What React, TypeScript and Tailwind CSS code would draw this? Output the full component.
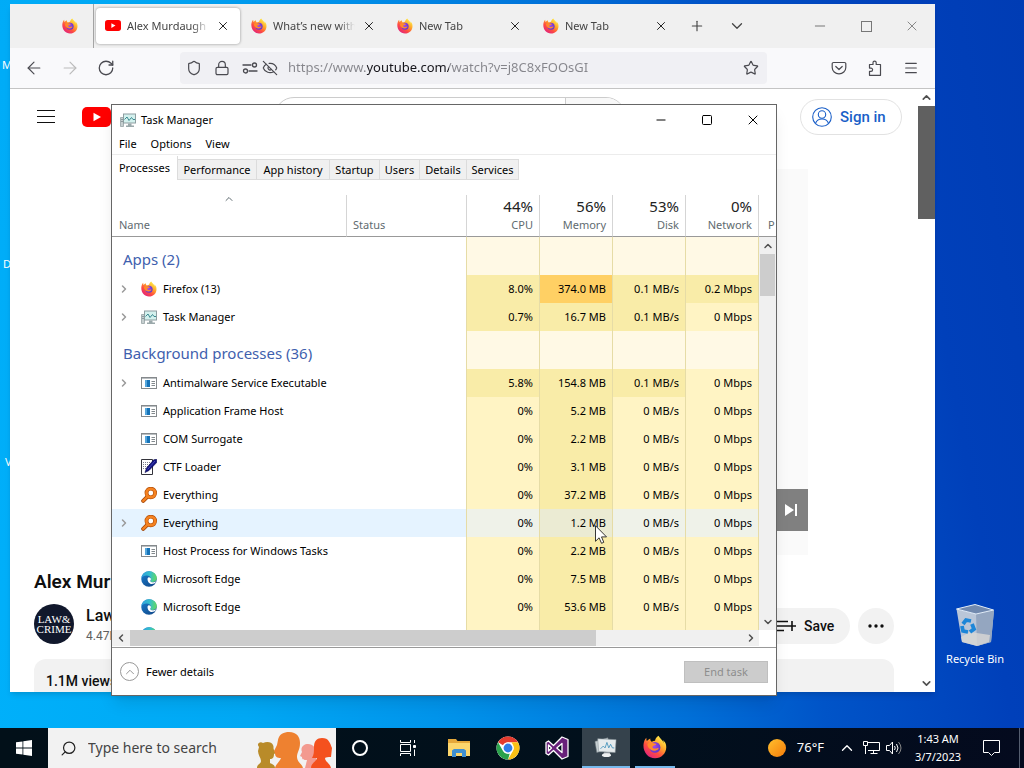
import React, { useState } from 'react';
import {
  ArrowLeft,
  ArrowRight,
  ChevronDown,
  ChevronLeft,
  ChevronRight,
  ChevronUp,
  EyeOff,
  Lock,
  Menu,
  Minus,
  Plus,
  RotateCw,
  Search,
  Settings2,
  Shield,
  Square,
  Star,
  X,
} from 'lucide-react';

interface IconProps {
  className?: string;
}

const FirefoxIcon = ({ className }: IconProps) => (
  <svg viewBox="0 0 32 32" className={className} aria-hidden="true">
    <defs>
      <linearGradient id="fx-body" x1="0.85" y1="0.1" x2="0.2" y2="0.95">
        <stop offset="0" stopColor="#fff04d" />
        <stop offset="0.35" stopColor="#ffa52a" />
        <stop offset="0.65" stopColor="#ff4d40" />
        <stop offset="1" stopColor="#e0227e" />
      </linearGradient>
      <radialGradient id="fx-globe" cx="0.4" cy="0.4" r="0.7">
        <stop offset="0" stopColor="#a44bf0" />
        <stop offset="1" stopColor="#5a34c4" />
      </radialGradient>
    </defs>
    <path
      fill="url(#fx-body)"
      d="M30 11c-.8-1.700-2.200-3.500-3.500-4.100.8 1.500 1.300 3 1.500 4.200C26 6.500 22.500 4.600 20.600 1c-3.200 1.800-4.300 5-4.500 6.600-1.500.1-3 .6-4.300 1.300-1.600-.8-2.300-2.700-2.100-4.400-2 .9-3.500 2.300-4.500 3.400-.8-.9-.7-3.800-.7-4.400C2.400 5.100.8 9.400.6 13.500.3 23.200 7.200 31 16 31c8.500 0 15-6.500 15-14.700 0-2-.3-3.800-1-5.300z"
    />
    <circle cx="16" cy="16.500" r="7.200" fill="url(#fx-globe)" />
    <path
      fill="#ff8a2b"
      d="M6 12c2-2.500 5-2.600 7-1.500l4 1c1 .4.500 1.500-.4 1.800l-3.100 1.200c-1.200.6-1 2.200.2 3 1.900 1.200 4 .2 6-.3 1.500-.3 1.300 1 .4 1.800-2.500 2.200-6.300 2.600-9 1C7.500 18 5.500 15 6 12z"
    />
  </svg>
);

const EdgeIcon = ({ className }: IconProps) => (
  <svg viewBox="0 0 32 32" className={className} aria-hidden="true">
    <defs>
      <linearGradient id="edge-top" x1="0" y1="0.4" x2="1" y2="0.5">
        <stop offset="0" stopColor="#2f9fe0" />
        <stop offset="0.55" stopColor="#35c1c9" />
        <stop offset="1" stopColor="#62d962" />
      </linearGradient>
      <linearGradient id="edge-low" x1="0" y1="0" x2="0.8" y2="1">
        <stop offset="0" stopColor="#1b7fd0" />
        <stop offset="1" stopColor="#114a8b" />
      </linearGradient>
    </defs>
    <circle cx="16" cy="16" r="15.500" fill="url(#edge-low)" />
    <path
      fill="url(#edge-top)"
      d="M.8 14C2 6 8.300.5 16 .5c8.500 0 15.500 6 15.500 13.500 0 5-4 8-8 8-3 0-5-1-5-2.200 0-1 1.500-1.300 1.500-4C20 12.500 16.500 9 11.500 9 6.500 9 2.500 11 .8 14z"
    />
    <path fill="#fff" d="M13 16c0-1.800 1-3.200 2.600-3.600 2.600.1 4.300 1.900 4.300 3.800 0 2.300-1.400 2.500-1.400 3.700 0 1.600 2.700 2.500 5.300 2.500 2.300 0 4.300-.8 5.200-1.400.7-.4 1.200.3.800 1C28.500 24.500 25 26 21.500 26 16.500 26 13 21 13 16z" />
  </svg>
);

const ChromeIcon = ({ className }: IconProps) => (
  <svg viewBox="0 0 48 48" className={className} aria-hidden="true">
    <circle cx="24" cy="24" r="23" fill="#fff" />
    <path fill="#e33b2e" d="M24 1a23 23 0 0 1 19.900 11.500H24a11.500 11.500 0 0 0-10 5.800L4.100 12.500A23 23 0 0 1 24 1z" />
    <path fill="#fbc116" d="M43.900 12.500A23 23 0 0 1 24 47l10-17.300a11.500 11.500 0 0 0 0-11.500l-3-5.700z" />
    <path fill="#2ba24c" d="M4.100 12.500 14 29.800a11.500 11.500 0 0 0 13.500 5.200L24 47A23 23 0 0 1 4.100 12.500z" />
    <circle cx="24" cy="24" r="11" fill="#fff" />
    <circle cx="24" cy="24" r="8.800" fill="#2f7de9" />
  </svg>
);

const TaskManagerIcon = ({ className }: IconProps) => (
  <svg viewBox="0 0 16 16" className={className} aria-hidden="true">
    <path fill="#c6cfd0" stroke="#97a3a4" strokeWidth="0.800" d="M.5 5.500h3v9h-3z" />
    <path stroke="#7d8d8f" strokeWidth="0.800" d="M1 7.500h2M1 9.500h2" />
    <rect x="3.500" y="2" width="12" height="9" fill="#d3f1ee" stroke="#8d9ea1" />
    <path fill="none" stroke="#3a8a90" d="M4.500 7.500 7 5l2 3.500 2.500-3 1.500 2h2" />
    <path fill="#9aa8aa" d="M8 11.500h3.500v2H14V15H6v-1.500h2z" />
  </svg>
);

const TaskManagerLargeIcon = ({ className }: IconProps) => (
  <svg viewBox="0 0 26 24" className={className} aria-hidden="true">
    <path fill="#c7d0d3" stroke="#7a858a" strokeWidth="0.600" d="m1 6 14-4 2 12L3 18z" />
    <path fill="#e5ebed" stroke="#89949a" strokeWidth="0.600" d="m4 3 20 1-1 14-18-1z" />
    <path fill="none" stroke="#3e8fb8" strokeWidth="0.900" d="m7 14 3-3 2 2 2-6 2 6 2-4 2 4h2" />
    <path fill="#c9ced1" d="M11 18h6l1 3c-1 2-7 2-9 0z" />
    <ellipse cx="13.500" cy="21" rx="5" ry="2" fill="#eef1f2" />
  </svg>
);

const ProcessIcon = ({ className }: IconProps) => (
  <svg viewBox="0 0 16 16" className={className} aria-hidden="true">
    <rect x="0.500" y="2.500" width="15" height="11" fill="#fff" stroke="#85898c" />
    <path stroke="#b9bec1" d="M1 3.500h14" />
    <rect x="4" y="5" width="5" height="7" fill="#1673b8" />
    <rect x="4" y="5" width="2" height="7" fill="#55a6dc" />
    <path stroke="#82898d" d="M10.500 6.500H14M10.500 8.500H14M10.500 10.500H14" />
  </svg>
);

const CtfIcon = ({ className }: IconProps) => (
  <svg viewBox="0 0 16 16" className={className} aria-hidden="true">
    <path fill="#fff" stroke="#33333b" d="M.5.500h11v15H.5z" />
    <path stroke="#777a88" strokeDasharray="1 1" d="M2 3.500h8M2 5.500h7M2 7.500h5M2 9.500h4" />
    <path fill="#111184" stroke="#07074a" strokeWidth="0.600" d="m15.700.3-3 .5L5.500 9 4 13.500l4-2L15.700 3.500z" />
    <path stroke="#5a62c8" strokeWidth="0.700" d="M14 2 6.500 10.500" />
  </svg>
);

const EverythingIcon = ({ className }: IconProps) => (
  <svg viewBox="0 0 16 16" className={className} aria-hidden="true">
    <path stroke="#a24508" strokeWidth="4" strokeLinecap="round" d="m2.200 13.800 4-4" />
    <circle cx="9.800" cy="6" r="4.300" fill="#fff" stroke="#b4500a" strokeWidth="3.800" />
    <path stroke="#f58220" strokeWidth="2.400" strokeLinecap="round" d="m2.200 13.800 4-4" />
    <circle cx="9.800" cy="6" r="4.300" fill="none" stroke="#f58220" strokeWidth="2.600" />
  </svg>
);

const YouTubeIcon = ({ className }: IconProps) => (
  <svg viewBox="0 0 29 20" className={className} aria-hidden="true">
    <rect width="29" height="20" rx="5" fill="#f00" />
    <path fill="#fff" d="m11.500 5.700 7.500 4.300-7.500 4.300z" />
  </svg>
);

const PocketIcon = ({ className }: IconProps) => (
  <svg viewBox="0 0 16 16" className={className} fill="none" stroke="currentColor" strokeWidth="1.200" aria-hidden="true">
    <path d="M2.500 2.500h11a1.300 1.300 0 0 1 1.300 1.300V7.500a6.800 6.300 0 0 1-13.600 0V3.800a1.300 1.300 0 0 1 1.300-1.300z" />
    <path strokeLinecap="round" strokeLinejoin="round" d="m4.800 6.500 3.200 3 3.200-3" />
  </svg>
);

const PuzzleIcon = ({ className }: IconProps) => (
  <svg viewBox="0 0 16 16" className={className} fill="none" stroke="currentColor" strokeWidth="1.200" aria-hidden="true">
    <path d="M2.500 4.500H6V2.800a1.600 1.600 0 0 1 3.200 0v1.700h4.300v10.800H2.500v-4H4a1.600 1.600 0 0 0 0-3.200H2.500z" strokeLinejoin="round" />
  </svg>
);

const PermissionsIcon = ({ className }: IconProps) => (
  <svg viewBox="0 0 16 16" className={className} fill="none" stroke="currentColor" strokeWidth="1.300" strokeLinecap="round" aria-hidden="true">
    <path d="M1 5h8M7 11h8" />
    <circle cx="12.500" cy="5" r="2" />
    <circle cx="3.500" cy="11" r="2" />
  </svg>
);

const RecycleBinIcon = ({ className }: IconProps) => (
  <svg viewBox="0 0 40 44" className={className} aria-hidden="true">
    <path fill="#b9c6d8" d="M1.500 6 21 11l18-4-3 32-14 4-15-4z" />
    <path fill="#94a6c0" d="m21 11 18-4-3 32-14 4z" />
    <path fill="#7189ae" stroke="#e3edf7" d="M1.500 6 20 1.500 38.500 7 21 11z" />
    <path fill="#d9d8d4" opacity="0.800" d="m6 34 9-5 20 3-1 7-12 4-15-4z" />
    <g fill="none" stroke="#1c86d8" strokeWidth="3.800">
      <path d="m8 21 3-4 5 1" />
      <path d="m17 21 2 5-4 3" />
      <path d="m13 29-5-1-1-5" />
    </g>
  </svg>
);

const PeopleArt = ({ className }: IconProps) => (
  <svg viewBox="0 0 80 38" className={className} aria-hidden="true">
    <path fill="#b98b29" d="M3 17c-3-3 1-6 4-4 4-2 9-1 10 2 1 2 0 3 1 5l2 3-2 1c0 3-1 5-4 5v4c2 1 5 2 5 5H1c0-4 4-4 4-7 0-3-3-6-3-10z" />
    <path fill="#f39a8f" d="M46 22c-2-5 2-8 6-8 5 0 8 4 8 8v16H49l2-8c-3 0-5 0-5-3l-2-1z" />
    <path fill="#ee8130" d="M22 10c1-6 6-8 11-8 8 0 11 5 11 11 0 7-3 9-3 14 0 5 5 7 6 11H19c1-4 5-7 6-10-4 0-6-1-6-5l-1-2 3-6z" />
    <path fill="#f4511e" d="M58 17c0-6 3-9 8-9 7 0 8 5 10 10l-1 9c-3 0-5 0-6 1 0 4 5 5 6 10H55c0-5 5-6 6-10h-5c2-3 2-7 2-11z" />
  </svg>
);

const VisualStudioIcon = ({ className }: IconProps) => (
  <svg viewBox="0 0 24 24" className={className} aria-hidden="true">
    <path
      fill="#68217a"
      stroke="#fff"
      strokeWidth="1.300"
      strokeLinejoin="round"
      fillRule="evenodd"
      d="m17 1 6 2.500v17L17 23l-8.500-8.500L3.500 19 1 17.500v-11L3.500 5l5 4.500zM17 7.500 11.800 12l5.200 4.500zM3.500 9v6l3-3z"
    />
  </svg>
);

const icons = {
  firefox: FirefoxIcon,
  taskmgr: TaskManagerIcon,
  process: ProcessIcon,
  ctf: CtfIcon,
  everything: EverythingIcon,
  edge: EdgeIcon,
};

interface Process {
  name: string;
  icon: keyof typeof icons;
  expandable?: boolean;
  hovered?: boolean;
  usage: [string, string, string, string];
}

const groups: { title: string; processes: Process[] }[] = [
  {
    title: 'Apps (2)',
    processes: [
      { name: 'Firefox (13)', icon: 'firefox', expandable: true, usage: ['8.0%', '374.0 MB', '0.1 MB/s', '0.2 Mbps'] },
      { name: 'Task Manager', icon: 'taskmgr', expandable: true, usage: ['0.7%', '16.7 MB', '0.1 MB/s', '0 Mbps'] },
    ],
  },
  {
    title: 'Background processes (36)',
    processes: [
      { name: 'Antimalware Service Executable', icon: 'process', expandable: true, usage: ['5.8%', '154.8 MB', '0.1 MB/s', '0 Mbps'] },
      { name: 'Application Frame Host', icon: 'process', usage: ['0%', '5.2 MB', '0 MB/s', '0 Mbps'] },
      { name: 'COM Surrogate', icon: 'process', usage: ['0%', '2.2 MB', '0 MB/s', '0 Mbps'] },
      { name: 'CTF Loader', icon: 'ctf', usage: ['0%', '3.1 MB', '0 MB/s', '0 Mbps'] },
      { name: 'Everything', icon: 'everything', usage: ['0%', '37.2 MB', '0 MB/s', '0 Mbps'] },
      { name: 'Everything', icon: 'everything', expandable: true, hovered: true, usage: ['0%', '1.2 MB', '0 MB/s', '0 Mbps'] },
      { name: 'Host Process for Windows Tasks', icon: 'process', usage: ['0%', '2.2 MB', '0 MB/s', '0 Mbps'] },
      { name: 'Microsoft Edge', icon: 'edge', usage: ['0%', '7.5 MB', '0 MB/s', '0 Mbps'] },
      { name: 'Microsoft Edge', icon: 'edge', usage: ['0%', '53.6 MB', '0 MB/s', '0 Mbps'] },
      { name: '', icon: 'edge', usage: ['', '', '', ''] },
    ],
  },
];

const totals = [
  { label: 'CPU', value: '44%' },
  { label: 'Memory', value: '56%' },
  { label: 'Disk', value: '53%' },
  { label: 'Network', value: '0%' },
];

function heatClass(value: string, column: number, hovered?: boolean): string {
  if (hovered) return column === 1 ? 'bg-[#ebebd3]' : 'bg-[#eff2e9]';
  if (value === '374.0 MB') return 'bg-[#ffd064]';
  if (column === 1) return 'bg-[#f9eca8]';
  return value === '' || value.startsWith('0 ') || value === '0%' ? 'bg-[#fff4c4]' : 'bg-[#f9eca8]';
}

const managerTabs = [
  { label: 'Performance', width: 'w-[79px]' },
  { label: 'App history', width: 'w-[73px]' },
  { label: 'Startup', width: 'w-[50px]' },
  { label: 'Users', width: 'w-[40px]' },
  { label: 'Details', width: 'w-[47px]' },
  { label: 'Services', width: 'w-[52px]' },
];

const ProcessTable = () => (
  <table className="w-full table-fixed border-separate border-spacing-0">
    <colgroup>
      <col />
      <col className="w-[120px]" />
      <col className="w-[73px]" />
      <col className="w-[73px]" />
      <col className="w-[73px]" />
      <col className="w-[73px]" />
      <col className="w-[17px]" />
    </colgroup>
    <thead>
      <tr className="h-[42px] text-[#5f6b70]">
        <th className="relative border-r border-b border-r-[#d5d5d5] border-b-[#999] pb-[3px] pl-[7px] text-left align-bottom font-normal">
          <ChevronUp className="absolute -top-0.5 left-1/2 h-3 w-3 -translate-x-1/2" strokeWidth={2} />
          Name
        </th>
        <th className="border-r border-b border-r-[#d5d5d5] border-b-[#999] pb-[3px] pl-1.5 text-left align-bottom font-normal">
          Status
        </th>
        {totals.map((total) => (
          <th
            key={total.label}
            className="border-r border-b border-r-[#d5d5d5] border-b-[#999] p-0 pr-1.5 pb-[3px] text-right align-bottom font-normal"
          >
            <span className="block text-[15px] leading-[22px] text-[#222]">{total.value}</span>
            <span className="block leading-4">{total.label}</span>
          </th>
        ))}
        <th className="overflow-hidden border-b border-[#999] pb-[3px] pl-[9px] text-left align-bottom font-normal">P</th>
      </tr>
    </thead>
    <tbody>
      {groups.map((group) => (
        <React.Fragment key={group.title}>
          <tr className="h-[38px]">
            <th colSpan={2} scope="rowgroup" className="border-r border-[#e6dca6] pt-1.5 pl-[11px] text-left text-[15px] leading-5 font-normal text-[#3f5fae]">
              {group.title}
            </th>
            {totals.map((total) => (
              <td key={total.label} className="border-r border-[#e6dca6] bg-[#fff9e5]" />
            ))}
            <td />
          </tr>
          {group.processes.map((process, index) => {
            const Icon = icons[process.icon];
            return (
              <tr key={index} className={process.hovered ? 'h-7 bg-[#e5f3ff]' : 'h-7'}>
                <td colSpan={2} className="border-r border-[#e6dca6] p-0">
                  <div className="flex items-center pl-1.5">
                    <span className="w-[23px]">
                      {process.expandable && <ChevronRight className="h-3 w-3 text-[#9a9a9a]" strokeWidth={3} />}
                    </span>
                    <Icon className="h-4 w-4 shrink-0" />
                    <span className="pl-1.5 whitespace-nowrap">{process.name}</span>
                  </div>
                </td>
                {process.usage.map((value, column) => (
                  <td
                    key={column}
                    className={`border-r border-[#e6dca6] p-0 pr-1.5 text-right whitespace-nowrap ${heatClass(value, column, process.hovered)}`}
                  >
                    {value}
                  </td>
                ))}
                <td />
              </tr>
            );
          })}
        </React.Fragment>
      ))}
    </tbody>
  </table>
);

const TaskManagerWindow = () => (
  <section
    aria-label="Task Manager"
    className="absolute top-[104px] right-[247px] bottom-8 left-[111px] flex flex-col border border-[#666] bg-white text-[11px] leading-4 text-black shadow-lg"
  >
    <header className="flex h-[29px] shrink-0 items-center pl-2">
      <TaskManagerIcon className="h-4 w-4" />
      <h1 className="flex-1 pl-[5px]">Task Manager</h1>
      <button aria-label="Minimize" className="flex w-[46px] justify-center">
        <Minus className="h-[14px] w-[14px]" strokeWidth={1.7} />
      </button>
      <button aria-label="Maximize" className="flex w-[46px] justify-center">
        <Square className="h-3 w-3" strokeWidth={2} strokeLinejoin="miter" />
      </button>
      <button aria-label="Close" className="flex w-[46px] justify-center">
        <X className="h-4 w-4" strokeWidth={1.5} />
      </button>
    </header>
    <nav className="flex h-[21px] shrink-0 items-center gap-[14px] border-b border-[#ececec] pl-[7px]">
      <button>File</button>
      <button>Options</button>
      <button>View</button>
    </nav>
    <div role="tablist" className="flex h-[25px] shrink-0 items-end">
      <button role="tab" aria-selected="true" className="h-6 w-[66px] border-r border-[#dcdcdc]">
        Processes
      </button>
      {managerTabs.map((tab) => (
        <button
          key={tab.label}
          role="tab"
          aria-selected="false"
          className={`h-[21px] border-t border-r border-b border-[#dcdcdc] bg-[#f0f0f0] ${tab.width}`}
        >
          {tab.label}
        </button>
      ))}
    </div>
    <div className="relative mt-[15px] min-h-0 flex-1 overflow-hidden">
      <ProcessTable />
      <div className="absolute top-[42px] right-0 bottom-0 flex w-[17px] flex-col items-center bg-[#f0f0f0] text-[#505050]">
        <ChevronUp className="mt-[3px] mb-0.5 h-3 w-3 shrink-0" strokeWidth={3} />
        <div className="h-[42px] w-[15px] bg-[#cdcdcd]" />
        <ChevronDown className="mt-auto mb-0.5 h-3 w-3 shrink-0" strokeWidth={3} />
      </div>
    </div>
    <div className="mr-[17px] flex h-4 shrink-0 items-center bg-[#f0f0f0] text-[#505050]">
      <ChevronLeft className="mx-[3px] h-3 w-3 shrink-0" strokeWidth={3} />
      <div className="h-full w-[72%] bg-[#cdcdcd]" />
      <ChevronRight className="mr-0.5 ml-auto h-3 w-3 shrink-0" strokeWidth={3} />
    </div>
    <footer className="mt-px flex h-12 shrink-0 items-center justify-between border-t border-[#999] pr-2 pl-2">
      <button className="flex items-center gap-[7px]">
        <span className="flex h-[19px] w-[19px] items-center justify-center rounded-full border border-[#999] text-[#888]">
          <ChevronUp className="h-[14px] w-[14px]" strokeWidth={1.5} />
        </span>
        Fewer details
      </button>
      <button disabled className="h-[22px] w-[84px] border border-[#bfbfbf] bg-[#cccccc] text-[#8d8d8d]">
        End task
      </button>
    </footer>
  </section>
);

const browserTabs = [
  { title: 'Alex Murdaugh', icon: YouTubeIcon, active: true },
  { title: 'What’s new with', icon: FirefoxIcon, active: false },
  { title: 'New Tab', icon: FirefoxIcon, active: false },
  { title: 'New Tab', icon: FirefoxIcon, active: false },
];

const BrowserChrome = () => {
  const [url, setUrl] = useState('https://www.youtube.com/watch?v=j8C8xFOOsGI');

  return (
    <>
      <div className="flex h-11 shrink-0 items-center bg-[#f0f0f0] text-[#444]">
        <button aria-label="Firefox View" className="flex h-full w-[84px] items-center justify-end border-r border-[#a5a5a5] pr-[15px]">
          <FirefoxIcon className="h-4 w-4" />
        </button>
        <div className="ml-px flex">
          {browserTabs.map((tab, index) => {
            const Icon = tab.icon;
            return (
              <div
                key={index}
                className={
                  tab.active
                    ? 'mx-px flex h-9 w-36 items-center gap-1.5 rounded bg-white px-[9px] shadow-[0_0_3px_rgba(0,0,0,0.4)]'
                    : 'mx-px flex h-9 w-36 items-center gap-1.5 px-[9px]'
                }
              >
                <Icon className="w-4 shrink-0" />
                <span className="min-w-0 flex-1 [mask-image:linear-gradient(to_right,black_80%,transparent)] text-[11px] whitespace-nowrap">
                  {tab.title}
                </span>
                <button aria-label="Close tab" className="flex w-4 shrink-0 justify-center text-[#222]">
                  <X className="h-[14px] w-[14px]" strokeWidth={1.7} />
                </button>
              </div>
            );
          })}
        </div>
        <button aria-label="Open a new tab" className="flex w-9 justify-center">
          <Plus className="h-4 w-4" strokeWidth={1.7} />
        </button>
        <button aria-label="List all tabs" className="ml-1 flex w-9 justify-center">
          <ChevronDown className="h-[18px] w-[18px]" strokeWidth={1.7} />
        </button>
        <div className="ml-auto flex text-[#777]">
          <button aria-label="Minimize" className="flex w-[46px] justify-center">
            <Minus className="h-4 w-4" strokeWidth={1.5} />
          </button>
          <button aria-label="Maximize" className="flex w-[46px] items-center justify-center">
            <span className="h-[11px] w-[11px] border border-[#777]" />
          </button>
          <button aria-label="Close" className="flex w-[46px] justify-center">
            <X className="h-4 w-4" strokeWidth={1.3} />
          </button>
        </div>
      </div>
      <div className="flex h-[41px] shrink-0 items-center border-b border-[#c4c4c4] bg-[#f9f9fb] px-1.5 text-[#4a4a50]">
        <button aria-label="Back" className="flex w-9 justify-center">
          <ArrowLeft className="h-5 w-5" strokeWidth={1.4} />
        </button>
        <button aria-label="Forward" className="flex w-9 justify-center text-[#bbb]">
          <ArrowRight className="h-5 w-5" strokeWidth={1.4} />
        </button>
        <button aria-label="Reload" className="flex w-9 justify-center">
          <RotateCw className="h-[18px] w-[18px]" strokeWidth={1.7} />
        </button>
        <div className="mr-[54px] ml-14 flex h-8 flex-1 items-center rounded bg-[#f0f0f4] px-1.5">
          <Shield className="h-4 w-4 shrink-0" strokeWidth={1.8} />
          <Lock className="ml-3 h-4 w-4 shrink-0" strokeWidth={1.8} />
          <PermissionsIcon className="ml-3 h-4 w-4 shrink-0" />
          <EyeOff className="ml-1 h-4 w-4 shrink-0" strokeWidth={1.8} />
          <input
            aria-label="Address"
            value={url}
            onChange={(event) => setUrl(event.target.value)}
            className="ml-2.5 min-w-0 flex-1 bg-[linear-gradient(to_right,#85858b_79px,#15141a_79px,#15141a_161px,#85858b_161px)] bg-clip-text text-[13px] text-transparent outline-none"
          />
          <button aria-label="Bookmark this page">
            <Star className="mr-0.5 h-4 w-4" strokeWidth={1.8} />
          </button>
        </div>
        <button aria-label="Save to Pocket" className="flex w-9 justify-center">
          <PocketIcon className="h-4 w-4" />
        </button>
        <button aria-label="Extensions" className="flex w-9 justify-center">
          <PuzzleIcon className="h-4 w-4" />
        </button>
        <button aria-label="Application menu" className="flex w-9 justify-center">
          <Menu className="h-4 w-4" strokeWidth={1.7} />
        </button>
      </div>
    </>
  );
};

const VideoPage = () => (
  <main className="min-w-0 flex-1 overflow-hidden font-['Roboto',sans-serif] text-[#0f0f0f]">
    <div className="flex h-14 items-center px-4">
      <button aria-label="Guide" className="flex w-10 justify-center">
        <svg viewBox="0 0 18 14" className="h-[14px] w-[18px]" stroke="currentColor" strokeWidth="1">
          <path d="M0 .5h18M0 6.500h18M0 12.500h18" />
        </svg>
      </button>
      <a href="#home" aria-label="Home" className="ml-4">
        <YouTubeIcon className="h-5 w-[29px]" />
      </a>
      <div className="mr-3 flex flex-1 justify-center">
        <div className="flex h-10 w-[352px] overflow-hidden rounded-full border border-[#ccc]">
          <input aria-label="Search videos" className="min-w-0 flex-1 px-4 outline-none" />
          <button aria-label="Search" className="flex w-[60px] items-center justify-center border-l border-[#ccc] bg-[#f8f8f8]">
            <Search className="h-5 w-5" strokeWidth={1.5} />
          </button>
        </div>
      </div>
      <a href="#signin" className="flex h-9 w-[102px] items-center gap-2 rounded-full border border-[#e2e2e2] pl-[11px] text-[15px] font-medium text-[#1a5fc8]">
        <svg viewBox="0 0 20 20" className="h-5 w-5" fill="none" stroke="currentColor" strokeWidth="1.100" aria-hidden="true">
          <circle cx="10" cy="10" r="9.300" />
          <circle cx="10" cy="7.500" r="3.700" />
          <path d="M3.500 16.500c1-3.300 3.500-4.500 6.500-4.500s5.500 1.200 6.500 4.500" />
        </svg>
        Sign in
      </a>
    </div>
    <div className="mx-[110px] mt-6 flex h-[386px] flex-col justify-end bg-[#fafafa] pb-6">
      <div className="flex h-[42px] items-center justify-end bg-[#808080] pr-2.5">
        <button aria-label="Next">
          <svg viewBox="0 0 14 14" className="h-[14px] w-[14px]" fill="#fff">
            <path d="M1 1v12l9-6zM11 1h2v12h-2z" />
          </svg>
        </button>
      </div>
    </div>
    <div className="mr-6 ml-6">
      <h2 className="mt-[13px] text-[19px] leading-7 font-semibold">Alex Mur</h2>
      <div className="mt-2 flex h-10 items-end">
        <div className="flex h-10 w-10 shrink-0 flex-col items-center justify-center rounded-full bg-[#11182c] font-['Liberation_Serif',serif] text-[11px] leading-[10px] text-white">
          <span>LAW&amp;</span>
          <span>CRIME</span>
        </div>
        <div className="ml-3 h-[38px] flex-1">
          <p className="text-base leading-5 font-medium">Law</p>
          <p className="text-xs leading-5 text-[#606060]">4.47M</p>
        </div>
        <button className="flex h-9 w-[90px] items-center gap-2 rounded-full bg-[#f2f2f2] pl-4 text-sm font-medium">
          <svg viewBox="0 0 20 14" className="h-[14px] w-5" stroke="currentColor" strokeWidth="1.600">
            <path d="M0 2.500h12M0 7h12M0 11.500h8M16 2v10M11 7h9" />
          </svg>
          Save
        </button>
        <button aria-label="More actions" className="ml-2 flex h-9 w-9 items-center justify-center rounded-full bg-[#f2f2f2]">
          <svg viewBox="0 0 16 4" className="h-1 w-4" fill="currentColor">
            <circle cx="2" cy="2" r="1.700" />
            <circle cx="8" cy="2" r="1.700" />
            <circle cx="14" cy="2" r="1.700" />
          </svg>
        </button>
      </div>
      <div className="mt-[15px] h-28 rounded-xl bg-[#f2f2f2] p-3 text-sm font-medium">1.1M views</div>
    </div>
  </main>
);

const BrowserWindow = () => (
  <section aria-label="Firefox" className="absolute top-1 right-[89px] bottom-9 left-2.5 flex flex-col bg-white shadow-md">
    <BrowserChrome />
    <div className="flex min-h-0 flex-1">
      <VideoPage />
      <div className="flex w-[17px] shrink-0 flex-col items-center bg-white text-[#505050]">
        <ChevronUp className="my-0.5 h-[13px] w-[13px] shrink-0" strokeWidth={3} />
        <div className="h-[113px] w-full bg-[#606060]" />
        <ChevronDown className="mt-auto mb-0.5 h-[13px] w-[13px] shrink-0" strokeWidth={3} />
      </div>
    </div>
  </section>
);

const Taskbar = () => (
  <footer className="flex h-10 shrink-0 bg-[linear-gradient(to_right,#021019,#01101c_60%,#040a1e)] text-white">
    <button aria-label="Start" className="flex w-12 items-center justify-center">
      <svg viewBox="0 0 16 16" className="h-4 w-4" fill="#fff">
        <path d="m0 2.300 6.500-.9v6.200H0zM7.300 1.300 16 0v7.600H7.300zM0 8.400h6.500v6.200L0 13.700zM7.300 8.400H16V16l-8.700-1.200z" />
      </svg>
    </button>
    <label className="relative flex w-72 items-center bg-[#f2f2f2] text-[#222]">
      <Search className="ml-3 h-[17px] w-[17px] -scale-x-100" strokeWidth={1.7} />
      <input
        aria-label="Type here to search"
        placeholder="Type here to search"
        className="ml-[11px] w-40 text-sm outline-none placeholder:text-[#444]"
      />
      <PeopleArt className="absolute right-0 bottom-0 h-[38px] w-20" />
    </label>
    <button aria-label="Cortana" className="flex w-12 items-center justify-center">
      <span className="h-4 w-4 rounded-full border-2 border-white" />
    </button>
    <button aria-label="Task View" className="flex w-12 items-center justify-center">
      <svg viewBox="0 0 16 16" className="h-4 w-4" fill="none" stroke="#fff">
        <path d="M.5 0v2.500h10V0M.5 16v-2.500h10V16M.5 4.500h10v7H.5zM14.500 0v3M14.500 9.500V16" />
        <path fill="#fff" d="M13.500 5.500h2v2h-2z" />
      </svg>
    </button>
    <div className="ml-[3px] flex gap-px">
      <button aria-label="File Explorer" className="flex w-12 items-center justify-center">
        <svg viewBox="0 0 22 18" className="h-[18px] w-[22px]">
          <path fill="#e5a83a" d="M0 0h8l1.500 2H22v15H0z" />
          <path fill="#fcd66c" d="M0 4h22v13H0z" />
          <path fill="#3f8fd0" d="M4 18v-6.500L6 10h10l2 1.500V18h-4v-4H8v4z" />
        </svg>
      </button>
      <button aria-label="Chrome" className="flex w-12 items-center justify-center">
        <ChromeIcon className="h-6 w-6" />
      </button>
      <button aria-label="Visual Studio" className="flex w-12 items-center justify-center">
        <VisualStudioIcon className="h-6 w-6" />
      </button>
      <button aria-label="Task Manager" className="flex w-12 items-center justify-center border-b-2 border-[#76b9ed] bg-[#35424c]">
        <TaskManagerLargeIcon className="h-[22px] w-6" />
      </button>
      <button aria-label="Firefox" className="flex w-12 justify-center">
        <span className="flex h-full w-10 items-center justify-center border-b-2 border-[#76b9ed]">
          <FirefoxIcon className="h-6 w-6" />
        </span>
      </button>
    </div>
    <div className="ml-auto flex items-center">
      <button className="flex items-center gap-[11px] text-[13px]">
        <span className="h-[18px] w-[18px] rounded-full bg-[linear-gradient(135deg,#ffc02e,#f57c0a)]" />
        76°F
      </button>
      <button aria-label="Show hidden icons" className="ml-[15px] flex w-4 justify-center">
        <ChevronUp className="h-[18px] w-[18px] shrink-0" strokeWidth={1.8} />
      </button>
      <svg viewBox="0 0 17 14" className="ml-2 h-[14px] w-[17px]" fill="none" stroke="#fff">
        <path d="M5 1.500h11.500v8H5M.5.500h4v4h-4zM2.500 5v8M7.500 12.500h7M10.500 10v2" />
      </svg>
      <svg viewBox="0 0 17 14" className="ml-1.5 h-[14px] w-[17px]" fill="none" stroke="#fff">
        <path d="M.5 4.500h3l3-3.500v12l-3-3.500h-3zM8.500 5q1.500 2 0 4M10.500 3q3 4 0 8" />
        <path stroke="#888" d="M12.500 1q5 6 0 12" />
      </svg>
      <time className="ml-2.5 w-[50px] text-center text-[11px] leading-[18px] whitespace-nowrap">
        1:43 AM
        <br />
        3/7/2023
      </time>
      <button aria-label="Notifications" className="ml-5 flex w-4 justify-center">
        <svg viewBox="0 0 17 16" className="h-4 w-[17px] shrink-0" fill="none" stroke="#fff">
          <path d="M.5.500h16v12h-5l-3 3-3-3h-5z" />
        </svg>
      </button>
      <button aria-label="Show desktop" className="ml-5 h-10 w-[5px] border-l border-[#555e70]" />
    </div>
  </footer>
);

export default function App() {
  return (
    <div className="flex h-screen flex-col overflow-hidden bg-[linear-gradient(80deg,#00b0fa_0%,#00a8f4_22%,#0092ea_40%,#0070d8_60%,#0054c8_72%,#0040ba_88%,#003cb4_100%)] font-['Noto_Sans',sans-serif]">
      <div className="relative min-h-0 flex-1 overflow-hidden">
        <span className="absolute top-[57px] left-[2px] text-[11px] leading-4 text-white">M</span>
        <span className="absolute top-[256px] left-[3px] text-[11px] leading-4 text-white">D</span>
        <span className="absolute top-[454px] left-[5px] text-[11px] leading-4 text-white">V</span>
        <div className="absolute top-[603px] right-3 flex w-[74px] flex-col items-center text-white">
          <RecycleBinIcon className="h-11 w-10" />
          <span className="mt-1 text-[11px] leading-4 whitespace-nowrap">Recycle Bin</span>
        </div>
        <BrowserWindow />
        <TaskManagerWindow />
        <svg viewBox="0 0 12 19" className="absolute top-[525px] left-[595px] h-[19px] w-3" aria-hidden="true">
          <path fill="#fff" stroke="#222" strokeWidth="0.900" d="M.5.700v15.600l3.600-3.500 2.400 5.500 2.300-1-2.300-5.400h5z" />
        </svg>
      </div>
      <Taskbar />
    </div>
  );
}
